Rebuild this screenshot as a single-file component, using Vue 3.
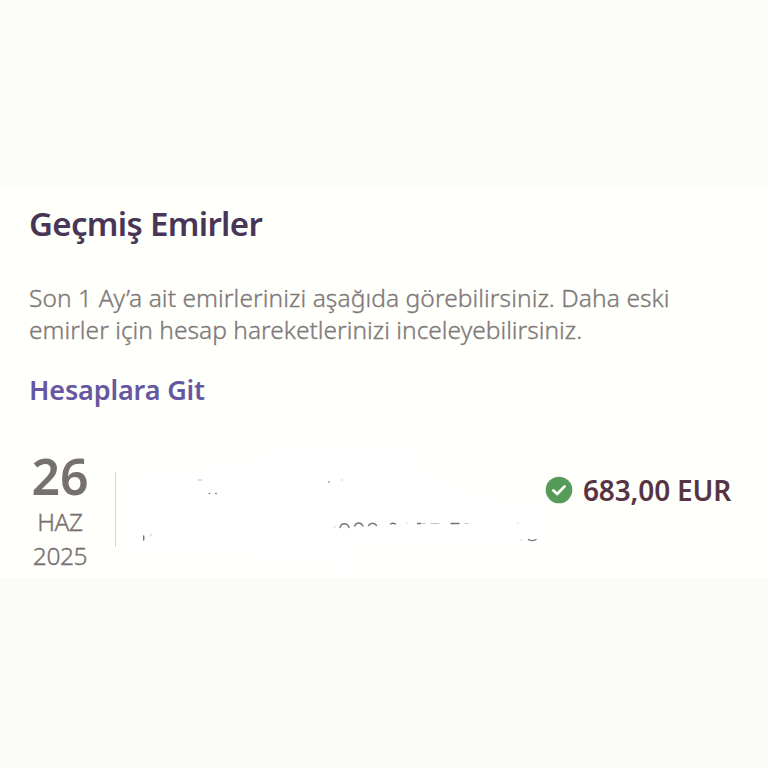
<script setup>
const order = { day: '26', month: 'HAZ', year: '2025', amount: '683,00 EUR' }
</script>

<template>
  <main class="page">
    <section class="orders">
      <h1 class="title">Geçmiş Emirler</h1>
      <p class="intro">
        <span class="line first">Son 1 Ay’a ait emirlerinizi aşağıda görebilirsiniz. Daha eski</span>
        <span class="line second">emirler için hesap hareketlerinizi inceleyebilirsiniz.</span>
      </p>
      <a class="link">Hesaplara Git</a>
      <article class="order">
        <div class="date">
          <strong class="day">{{ order.day }}</strong>
          <span class="month">{{ order.month }}</span>
          <span class="year">{{ order.year }}</span>
        </div>
        <div class="divider"></div>
        <svg class="details" width="430" height="130" viewBox="116 448 430 130" fill="none" stroke-linecap="round">
          <path fill="#fff" d="M128 480L250 462L320 432H418V466L465 492L545 510V544H355V575H334V558L130 556Z" />
          <g stroke="#c3c3c0" stroke-width="1">
            <path d="M198 481h4M341 481h1M334 528h1M150 537l2-2M407 524.5v-.5M422 524.5h3M431 524.5h8M465 524.5h3M518 524.5v-.5M521 541h1" />
          </g>
          <g stroke="#747474" stroke-width="1.4">
            <path d="M143.7 537v4M209.3 494.5h.4M215.8 494.5h.4M328.8 483h.3M417.5 524.5h3M451 524.5h8" />
            <path d="M340 528.5c1.5-5 7-5 9 0M354.5 527c2-4 6.5-4 8.5 0M368.5 526.5c2-3 6-3 8 0M390.5 525q2.5-1.5 5 0M528.5 540.5q3.5 2.3 7.5 0" />
          </g>
        </svg>
        <div class="result">
          <svg class="check" width="28" height="28" viewBox="0 0 28 28">
            <circle cx="14" cy="14" r="13.3" fill="#579b5b" />
            <path d="M8.4 14.5L12.2 18L19.6 10.4" fill="none" stroke="#fffffc" stroke-width="2.7" stroke-linecap="round" stroke-linejoin="round" />
          </svg>
          <span class="amount">{{ order.amount }}</span>
        </div>
      </article>
    </section>
  </main>
</template>

<style>
body {
  margin: 0;
  background: #fafaf9;
}
</style>

<style scoped>
.page {
  box-sizing: border-box;
  height: 768px;
  padding-top: 188px;
  background: linear-gradient(#fcfcfb 0 188px, #fafaf9 188px);
  font-family: "Noto Sans", sans-serif;
  overflow: hidden;
}
.orders {
  box-sizing: border-box;
  height: 390px;
  padding: 16px 29px 0;
  background: #fffffc;
}
.title {
  margin: 0;
  height: 40px;
  line-height: 40px;
  font-size: 33px;
  font-weight: 600;
  letter-spacing: -0.67px;
  color: #493657;
  white-space: nowrap;
}
.intro {
  margin: 38px 0 0;
  color: #807979;
  font-size: 24.5px;
  font-weight: 300;
  -webkit-text-stroke: 0.35px #807979;
  line-height: 32px;
  white-space: nowrap;
}
.line {
  display: block;
}
.first {
  letter-spacing: 0.08px;
}
.second {
  letter-spacing: 0.02px;
}
.link {
  display: block;
  margin-top: 27px;
  height: 34px;
  line-height: 34px;
  font-size: 27px;
  font-weight: 600;
  letter-spacing: -0.15px;
  color: #6558a0;
}
.order {
  display: flex;
  height: 130px;
  margin-top: 40px;
}
.date {
  display: flex;
  flex-direction: column;
  align-items: center;
  width: 62px;
  color: #777071;
}
.day {
  height: 58px;
  line-height: 58px;
  font-size: 50px;
  font-weight: 600;
}
.month,
.year {
  height: 34px;
  line-height: 34px;
  font-size: 24.5px;
  font-weight: 300;
  -webkit-text-stroke: 0.35px #777071;
  letter-spacing: -0.4px;
}
.divider {
  width: 1px;
  height: 75px;
  margin: 25px 0 0 24px;
  background: #d4d4d0;
}
.result {
  display: flex;
  align-items: center;
  height: 34px;
  margin: 26px 0 0 -1px;
  gap: 10px;
  white-space: nowrap;
}
.amount {
  font-size: 28px;
  font-weight: 600;
  line-height: 34px;
  letter-spacing: -0.15px;
  color: #573444;
}
.details {
  flex: none;
}
.check {
  flex: none;
}
</style>
